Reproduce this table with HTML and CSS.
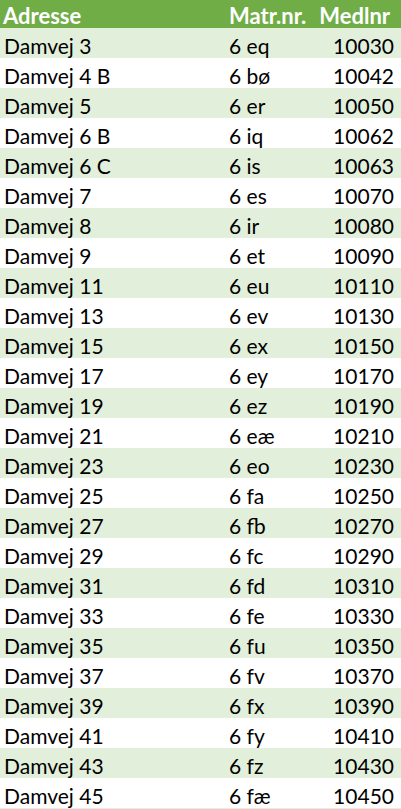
FILE: index.html
```html
<!DOCTYPE html>
<html lang="da">
<head>
<meta charset="utf-8">
<title>Adresser</title>
<link rel="stylesheet" href="styles.css">
</head>
<body>
<div class="sheet">
  <div class="row head"><span class="c1">Adresse</span><span class="c2">Matr.nr.</span><span class="c3">Medlnr</span></div>
  <div class="row"><span class="c1">Damvej 3</span><span class="c2">6 eq</span><span class="c3">10030</span></div>
  <div class="row"><span class="c1">Damvej 4 B</span><span class="c2">6 bø</span><span class="c3">10042</span></div>
  <div class="row"><span class="c1">Damvej 5</span><span class="c2">6 er</span><span class="c3">10050</span></div>
  <div class="row"><span class="c1">Damvej 6 B</span><span class="c2">6 iq</span><span class="c3">10062</span></div>
  <div class="row"><span class="c1">Damvej 6 C</span><span class="c2">6 is</span><span class="c3">10063</span></div>
  <div class="row"><span class="c1">Damvej 7</span><span class="c2">6 es</span><span class="c3">10070</span></div>
  <div class="row"><span class="c1">Damvej 8</span><span class="c2">6 ir</span><span class="c3">10080</span></div>
  <div class="row"><span class="c1">Damvej 9</span><span class="c2">6 et</span><span class="c3">10090</span></div>
  <div class="row"><span class="c1">Damvej 11</span><span class="c2">6 eu</span><span class="c3">10110</span></div>
  <div class="row"><span class="c1">Damvej 13</span><span class="c2">6 ev</span><span class="c3">10130</span></div>
  <div class="row"><span class="c1">Damvej 15</span><span class="c2">6 ex</span><span class="c3">10150</span></div>
  <div class="row"><span class="c1">Damvej 17</span><span class="c2">6 ey</span><span class="c3">10170</span></div>
  <div class="row"><span class="c1">Damvej 19</span><span class="c2">6 ez</span><span class="c3">10190</span></div>
  <div class="row"><span class="c1">Damvej 21</span><span class="c2">6 eæ</span><span class="c3">10210</span></div>
  <div class="row"><span class="c1">Damvej 23</span><span class="c2">6 eo</span><span class="c3">10230</span></div>
  <div class="row"><span class="c1">Damvej 25</span><span class="c2">6 fa</span><span class="c3">10250</span></div>
  <div class="row"><span class="c1">Damvej 27</span><span class="c2">6 fb</span><span class="c3">10270</span></div>
  <div class="row"><span class="c1">Damvej 29</span><span class="c2">6 fc</span><span class="c3">10290</span></div>
  <div class="row"><span class="c1">Damvej 31</span><span class="c2">6 fd</span><span class="c3">10310</span></div>
  <div class="row"><span class="c1">Damvej 33</span><span class="c2">6 fe</span><span class="c3">10330</span></div>
  <div class="row"><span class="c1">Damvej 35</span><span class="c2">6 fu</span><span class="c3">10350</span></div>
  <div class="row"><span class="c1">Damvej 37</span><span class="c2">6 fv</span><span class="c3">10370</span></div>
  <div class="row"><span class="c1">Damvej 39</span><span class="c2">6 fx</span><span class="c3">10390</span></div>
  <div class="row"><span class="c1">Damvej 41</span><span class="c2">6 fy</span><span class="c3">10410</span></div>
  <div class="row"><span class="c1">Damvej 43</span><span class="c2">6 fz</span><span class="c3">10430</span></div>
  <div class="row"><span class="c1">Damvej 45</span><span class="c2">6 fæ</span><span class="c3">10450</span></div>
  <div class="row"></div>
</div>
</body>
</html>
```
FILE: styles.css
```css
html, body {
  margin: 0;
  padding: 0;
  background: #ffffff;
}
body {
  font-family: "Lato", "Liberation Sans", sans-serif;
  color: #000000;
  overflow: hidden;
}
.sheet {
  width: 401px;
  display: flex;
  flex-direction: column;
}
.row {
  display: grid;
  grid-template-columns: 225px 1fr auto;
  align-items: end;
  height: 30px;
  padding: 0 7px 0 4px;
  font-size: 21px;
  line-height: 24px;
  box-sizing: border-box;
}
.row:nth-child(even) {
  background: #e2efda;
}
.row.head {
  height: 28px;
  background: #70ad47;
  color: #ffffff;
  font-weight: 700;
  font-size: 22px;
  padding-right: 11px;
  padding-left: 3px;
}
.row.head .c2 {
  padding-left: 1px;
}
.c3 {
  text-align: right;
}
```
